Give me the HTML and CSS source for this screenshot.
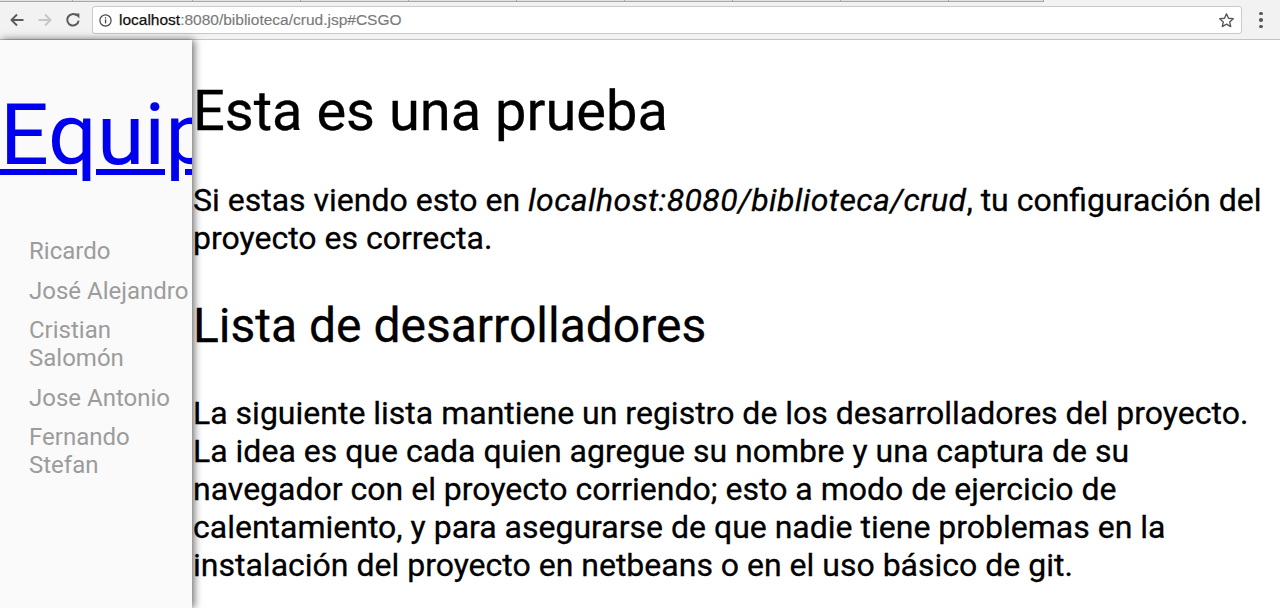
FILE: index.html
```html
<!DOCTYPE html>
<html lang="es">
<head>
<meta charset="utf-8">
<title>crud</title>
<link rel="stylesheet" href="styles.css">
</head>
<body>
<div class="chrome">
  <div class="tabstrip">
    <span class="tab t1"></span><span class="tab t2"></span><span class="tab"></span><span class="tab"></span><span class="tab"></span><span class="tab"></span><span class="tab"></span><span class="tab"></span><span class="tab"></span><span class="tab t-last"></span>
  </div>
  <div class="toolbar">
    <span class="navbtn">
      <svg width="18" height="18" viewBox="0 0 18 18"><path d="M15.5 9H3.5M9 3.5L3.5 9 9 14.5" fill="none" stroke="#5a5a5a" stroke-width="1.9"/></svg>
    </span>
    <span class="navbtn">
      <svg width="18" height="18" viewBox="0 0 18 18"><path d="M2.5 9h12M9 3.5L14.5 9 9 14.5" fill="none" stroke="#c6c6c6" stroke-width="1.9"/></svg>
    </span>
    <span class="navbtn">
      <svg width="18" height="18" viewBox="0 0 18 18"><path d="M14.6 9.6A5.7 5.7 0 1 1 12.8 4.6" fill="none" stroke="#5a5a5a" stroke-width="2"/><path d="M10.4 2.4h5v5z" fill="#5a5a5a"/></svg>
    </span>
    <div class="omnibox">
      <svg class="info" width="13" height="13" viewBox="0 0 13 13"><circle cx="6.5" cy="6.5" r="5.6" fill="none" stroke="#444" stroke-width="1.2"/><rect x="5.9" y="5.4" width="1.3" height="4" fill="#444"/><rect x="5.9" y="3.2" width="1.3" height="1.3" fill="#444"/></svg>
      <span class="url"><span class="host">localhost</span>:8080/biblioteca/crud.jsp#CSGO</span>
      <svg class="star" width="17" height="17" viewBox="0 0 17 17"><path d="M8.5 1.8l2 4.4 4.8.5-3.6 3.2 1 4.7-4.2-2.4-4.2 2.4 1-4.7-3.6-3.2 4.8-.5z" fill="none" stroke="#5a5a5a" stroke-width="1.4" stroke-linejoin="round"/></svg>
    </div>
    <span class="menu"><i></i><i></i><i></i></span>
  </div>
</div>
<div class="page">
  <aside class="sidebar">
    <h1 class="team"><a href="#">Equipo</a></h1>
    <ul class="devs">
      <li>Ricardo</li>
      <li>José Alejandro</li>
      <li>Cristian Salomón</li>
      <li>Jose Antonio</li>
      <li>Fernando Stefan</li>
    </ul>
  </aside>
  <main class="content">
    <h1 class="title">Esta es una prueba</h1>
    <p class="intro">Si estas viendo esto en <em>localhost:8080/biblioteca/crud</em>, tu configuración del proyecto es correcta.</p>
    <h2 class="subtitle">Lista de desarrolladores</h2>
    <p class="desc">La siguiente lista mantiene un registro de los desarrolladores del proyecto. La idea es que cada quien agregue su nombre y una captura de su navegador con el proyecto corriendo; esto a modo de ejercicio de calentamiento, y para asegurarse de que nadie tiene problemas en la instalación del proyecto en netbeans o en el uso básico de git.</p>
  </main>
</div>
</body>
</html>
```
FILE: styles.css
```css
html, body {
  margin: 0;
  padding: 0;
  height: 100%;
  overflow: hidden;
}
body {
  font-family: Roboto, "Noto Sans", sans-serif;
  background: #fff;
  display: flex;
  flex-direction: column;
}
.chrome {
  height: 39px;
  background: #f2f2f2;
  border-bottom: 1px solid #c4c4c4;
  flex-shrink: 0;
  display: flex;
  flex-direction: column;
}
.tabstrip {
  height: 2px;
  display: flex;
}
.tab {
  width: 108px;
  height: 2px;
  border-bottom: 1px solid #a8a8a8;
  border-right: 1px solid #a8a8a8;
  box-sizing: border-box;
  background: #e2e2e2;
}
.tab.t1 { width: 73px; }
.tab.t2 { width: 120px; }
.tab.t-last { width: 95px; }
.toolbar {
  flex: 1;
  display: flex;
  align-items: center;
  padding-left: 3px;
  padding-bottom: 1px;
}
.navbtn {
  width: 28px;
  height: 28px;
  display: flex;
  align-items: center;
  justify-content: center;
}
.omnibox {
  margin-left: 5px;
  width: 1151px;
  height: 28px;
  box-sizing: border-box;
  background: #fff;
  border: 1px solid #c9c9c9;
  border-radius: 3px;
  display: flex;
  align-items: center;
  padding-left: 6px;
}
.info { flex-shrink: 0; }
.url {
  margin-left: 7px;
  font-family: "Liberation Sans", Arial, sans-serif;
  font-size: 15.5px;
  color: #7a7a7a;
  flex: 1;
  -webkit-text-stroke: 0.15px #7a7a7a;
}
.host {
  color: #111;
  -webkit-text-stroke: 0.25px #111;
}
.star {
  margin-right: 6px;
}
.menu {
  width: 38px;
  display: flex;
  flex-direction: column;
  align-items: center;
  gap: 3px;
}
.menu i {
  width: 3.5px;
  height: 3.5px;
  border-radius: 50%;
  background: #5a5a5a;
}
.page {
  flex: 1;
  display: flex;
  min-height: 0;
}
.sidebar {
  width: 192px;
  flex-shrink: 0;
  background: #fafafa;
  overflow: hidden;
  position: relative;
  z-index: 1;
  box-shadow: 2px 0 8px rgba(0, 0, 0, 0.6);
}
.team {
  margin: 44px 0 0 0;
  font-size: 86px;
  font-weight: 400;
  line-height: 101px;
  white-space: nowrap;
}
.team a {
  color: #0000ee;
  text-decoration-thickness: 6px;
  text-underline-offset: 5px;
}
.devs {
  list-style: none;
  margin: 52px 0 0 0;
  padding: 0 0 0 29px;
}
.devs li {
  font-size: 24px;
  line-height: 28px;
  color: #9c9c9c;
  margin-bottom: 11.5px;
}
.content {
  flex: 1;
  padding-left: 1px;
  color: #000;
  -webkit-text-stroke: 0.3px #000;
}
.title {
  margin: 37.5px 0 37.5px 0;
  font-size: 56px;
  font-weight: 400;
}
.intro {
  margin: 32px 0;
  font-size: 32px;
}
.intro em {
  letter-spacing: 0.4px;
}
.subtitle {
  margin: 40px 0;
  font-size: 48px;
  font-weight: 400;
}
.desc {
  margin: 32px 0;
  font-size: 32px;
}
```
